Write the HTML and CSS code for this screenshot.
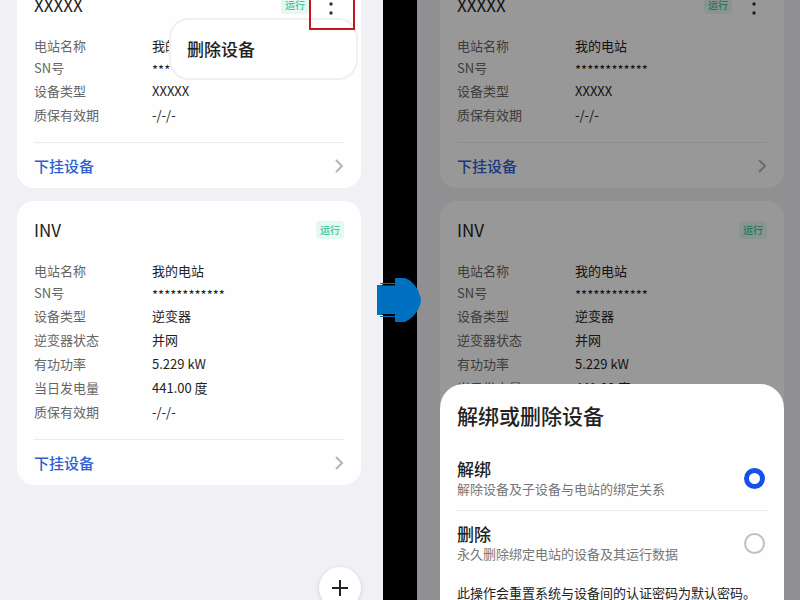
FILE: index.html
```html
<!DOCTYPE html>
<html lang="zh-CN">
<head>
  <meta charset="UTF-8">
  <meta name="viewport" content="width=device-width, initial-scale=1.0">
  <title>解绑或删除设备</title>
  <link rel="stylesheet" href="styles.css">
</head>
<body>
  <main class="steps">
    <!-- Step 1: device list with the menu open -->
    <section class="screen screen-list">
      <div class="device-list">
        <article class="card">
          <header class="card-header">
            <h2>XXXXX</h2>
            <span class="badge">运行</span>
            <button type="button" class="more highlighted" aria-label="更多">
              <svg width="4" height="22" viewBox="0 0 4 22"><circle cx="2" cy="2" r="1.700"/><circle cx="2" cy="10" r="1.700"/><circle cx="2" cy="19" r="1.700"/></svg>
            </button>
            <div class="menu">
              <button type="button">删除设备</button>
            </div>
          </header>
          <dl class="details">
            <div class="row compact"><dt>电站名称</dt><dd>我的电站</dd></div>
            <div class="row compact"><dt>SN号</dt><dd class="masked">************</dd></div>
            <div class="row"><dt>设备类型</dt><dd>XXXXX</dd></div>
            <div class="row"><dt>质保有效期</dt><dd>-/-/-</dd></div>
          </dl>
          <a href="#" class="card-link">下挂设备
            <svg width="9" height="14" viewBox="0 0 9 14"><path d="M1 1l6 6-6 6"/></svg>
          </a>
        </article>

        <article class="card">
          <header class="card-header">
            <h2>INV</h2>
            <span class="badge">运行</span>
          </header>
          <dl class="details">
            <div class="row compact"><dt>电站名称</dt><dd>我的电站</dd></div>
            <div class="row compact"><dt>SN号</dt><dd class="masked">************</dd></div>
            <div class="row"><dt>设备类型</dt><dd>逆变器</dd></div>
            <div class="row"><dt>逆变器状态</dt><dd>并网</dd></div>
            <div class="row"><dt>有功功率</dt><dd>5.229 kW</dd></div>
            <div class="row"><dt>当日发电量</dt><dd>441.00 度</dd></div>
            <div class="row"><dt>质保有效期</dt><dd>-/-/-</dd></div>
          </dl>
          <a href="#" class="card-link">下挂设备
            <svg width="9" height="14" viewBox="0 0 9 14"><path d="M1 1l6 6-6 6"/></svg>
          </a>
        </article>
      </div>
      <button type="button" class="add" aria-label="添加">
        <svg width="16" height="16" viewBox="0 0 16 16"><path d="M8 0v16M0 8h16"/></svg>
      </button>
    </section>

    <div class="divider">
      <svg class="arrow" width="46" height="46" viewBox="0 0 46 46">
        <path d="M0 8H18V1H28C34 3 38 8 41 13C42 17 44 20 44 23C44 27 42 30 41 33C38 38 34 42 28 45H18V38H0Z"/>
        <path class="arrow-line" d="M3 6.500H18M3 39.500H18"/>
        <path class="arrow-gap" d="M5 8H18M5 37.500H18"/>
      </svg>
    </div>

    <!-- Step 2: same list, dimmed under the sheet -->
    <section class="screen screen-confirm">
      <div class="device-list">
        <article class="card">
          <header class="card-header">
            <h2>XXXXX</h2>
            <span class="badge">运行</span>
            <button type="button" class="more" aria-label="更多">
              <svg width="4" height="22" viewBox="0 0 4 22"><circle cx="2" cy="2" r="1.700"/><circle cx="2" cy="10" r="1.700"/><circle cx="2" cy="19" r="1.700"/></svg>
            </button>
          </header>
          <dl class="details">
            <div class="row compact"><dt>电站名称</dt><dd>我的电站</dd></div>
            <div class="row compact"><dt>SN号</dt><dd class="masked">************</dd></div>
            <div class="row"><dt>设备类型</dt><dd>XXXXX</dd></div>
            <div class="row"><dt>质保有效期</dt><dd>-/-/-</dd></div>
          </dl>
          <a href="#" class="card-link">下挂设备
            <svg width="9" height="14" viewBox="0 0 9 14"><path d="M1 1l6 6-6 6"/></svg>
          </a>
        </article>

        <article class="card">
          <header class="card-header">
            <h2>INV</h2>
            <span class="badge">运行</span>
          </header>
          <dl class="details">
            <div class="row compact"><dt>电站名称</dt><dd>我的电站</dd></div>
            <div class="row compact"><dt>SN号</dt><dd class="masked">************</dd></div>
            <div class="row"><dt>设备类型</dt><dd>逆变器</dd></div>
            <div class="row"><dt>逆变器状态</dt><dd>并网</dd></div>
            <div class="row"><dt>有功功率</dt><dd>5.229 kW</dd></div>
            <div class="row"><dt>当日发电量</dt><dd>441.00 度</dd></div>
          </dl>
        </article>
      </div>
      <div class="scrim"></div>
      <form class="sheet">
        <h1>解绑或删除设备</h1>
        <div class="option">
          <label for="unbind">
            <span class="option-title">解绑</span>
            <span class="option-text">解除设备及子设备与电站的绑定关系</span>
          </label>
          <input type="radio" id="unbind" name="action" value="unbind" checked>
        </div>
        <div class="option">
          <label for="delete">
            <span class="option-title">删除</span>
            <span class="option-text">永久删除绑定电站的设备及其运行数据</span>
          </label>
          <input type="radio" id="delete" name="action" value="delete">
        </div>
        <p class="note">此操作会重置系统与设备间的认证密码为默认密码。</p>
      </form>
    </section>
  </main>
</body>
</html>
```
FILE: styles.css
```css
* {
  box-sizing: border-box;
}
body {
  margin: 0;
  font-family: "Noto Sans CJK SC", sans-serif;
  font-size: 13px;
  color: #222;
}
h1, h2, p, dl, dd {
  margin: 0;
}
button {
  padding: 0;
  border: none;
  background: none;
  font: inherit;
  color: inherit;
  cursor: pointer;
}
.steps {
  display: grid;
  grid-template-columns: 1fr 34px 1fr;
  height: 100vh;
  overflow: hidden;
}
.screen {
  position: relative;
  overflow: hidden;
  background-color: #f0f0f5;
}
.screen-list {
  padding: 0 22px 0 17px;
}
.screen-confirm {
  padding: 0 16px 0 23px;
}
/* list is scrolled a little, the first card is cut at the top */
.device-list {
  display: flex;
  flex-direction: column;
  gap: 13px;
  margin-top: -24px;
}
.card {
  padding: 16px 17px 0;
  border-radius: 17px;
  background-color: #fefefe;
}
.card-header {
  position: relative;
  display: flex;
  align-items: center;
  gap: 9px;
  height: 26px;
  margin-bottom: 17px;
}
.card-header h2 {
  flex: 1;
  font-size: 17px;
  font-weight: 400;
  line-height: 26px;
}
.badge {
  padding: 0 4px;
  border-radius: 4px;
  background-color: #e6f8f2;
  color: #3fc79a;
  font-size: 10px;
  font-weight: 500;
  line-height: 18px;
}
.more {
  position: relative;
  display: flex;
  align-items: center;
  justify-content: center;
  width: 26px;
  height: 26px;
}
.more svg {
  fill: #333;
}
.highlighted {
  z-index: 2;
}
.highlighted::after {
  content: "";
  position: absolute;
  inset: -12px -11px -12px -9px;
  border: 2px solid #c4161c;
}
.menu {
  position: absolute;
  top: 26px;
  right: -14px;
  z-index: 1;
  width: 189px;
  padding: 18px 16px;
  border: 2px solid #f0f0f0;
  border-radius: 20px;
  background-color: #fff;
}
.menu button {
  display: block;
  font-size: 17px;
  font-weight: 500;
  line-height: 22px;
}
.details {
  padding-bottom: 15px;
  border-bottom: 1px solid #ececee;
}
.row {
  display: grid;
  grid-template-columns: 118px 1fr;
  line-height: 24px;
}
.row.compact {
  line-height: 22px;
}
.row dt {
  color: #666;
}
.row .masked {
  padding-top: 4px;
  line-height: 18px;
}
.card-link {
  display: flex;
  align-items: center;
  justify-content: space-between;
  height: 45px;
  color: #2f5fd0;
  font-size: 15px;
  font-weight: 500;
  text-decoration: none;
}
.card-link svg {
  fill: none;
  stroke: #b4b4b6;
  stroke-width: 2;
}
.add {
  position: absolute;
  right: 22px;
  bottom: -9px;
  display: flex;
  align-items: center;
  justify-content: center;
  width: 42px;
  height: 42px;
  border-radius: 50%;
  background-color: #fff;
  box-shadow: 0 1px 4px rgba(0, 0, 0, 0.15);
}
.add svg {
  fill: none;
  stroke: #222;
  stroke-width: 2;
}
.divider {
  position: relative;
  z-index: 3;
  display: flex;
  align-items: center;
  justify-content: center;
  background-color: #000;
}
.arrow {
  flex: none;
  fill: #0070c0;
}
.arrow-line {
  stroke: #0070c0;
}
.arrow-gap {
  stroke: #000;
}
.scrim {
  position: absolute;
  inset: 0;
  background-color: rgba(0, 0, 0, 0.4);
}
.sheet {
  position: absolute;
  top: 64%;
  right: 16px;
  bottom: 0;
  left: 23px;
  padding: 17px 17px 0;
  overflow: hidden;
  border-radius: 24px 24px 0 0;
  background-color: #fefefe;
}
.sheet h1 {
  margin-bottom: 17px;
  font-size: 21px;
  font-weight: 500;
  line-height: 28px;
}
.option {
  display: flex;
  align-items: center;
  justify-content: space-between;
  padding: 12px 2px 12px 0;
}
.option + .option {
  border-top: 1px solid #ececee;
}
.option-title,
.option-text {
  display: block;
}
.option-title {
  font-size: 17px;
  font-weight: 500;
  line-height: 22px;
}
.option-text {
  color: #777;
  line-height: 18px;
}
.option input {
  appearance: none;
  width: 21px;
  height: 21px;
  margin: 0;
  border: 2px solid #c0c0c0;
  border-radius: 50%;
  background-color: #fff;
}
.option input:checked {
  border: 5px solid #1650e6;
}
.note {
  margin-top: 8px;
  line-height: 20px;
  white-space: nowrap;
}
```
